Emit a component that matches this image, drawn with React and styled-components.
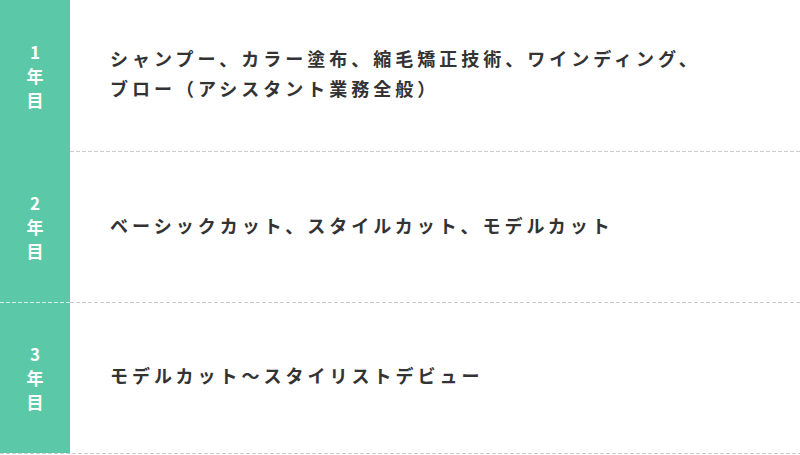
import React from "react";
import styled, { createGlobalStyle, css } from "styled-components";

const GlobalStyle = createGlobalStyle`
  html, body { margin: 0; padding: 0; background: #fff; }
  body { font-family: "Noto Sans CJK JP", "Noto Sans", sans-serif; }
`;

const dashed = (color) => css`
  background-image: repeating-linear-gradient(
    to right,
    ${color} 0 4px,
    transparent 4px 6px
  );
  background-size: 100% 1px;
  background-position: left bottom;
  background-repeat: no-repeat;
`;

const Table = styled.div`
  width: 800px;
  display: flex;
  flex-direction: column;
`;

const Row = styled.div`
  display: grid;
  grid-template-columns: 70px 1fr;
  height: ${(p) => p.$height}px;
  box-sizing: border-box;
  ${(p) =>
    p.$fullLine &&
    css`
      padding-bottom: 2px;
      ${dashed("#cccccc")}
      background-position: left calc(100% - 1px);
    `}
`;

const Head = styled.div`
  background-color: #5bc9a8;
  color: #fff;
  display: flex;
  flex-direction: column;
  align-items: center;
  justify-content: center;
  font-size: 17px;
  font-weight: 700;
  line-height: 24px;
  padding-bottom: 1px;
  box-sizing: border-box;
  ${(p) => p.$line && dashed("rgba(255,255,255,0.75)")}
`;

const Cell = styled.div`
  display: flex;
  align-items: center;
  padding: 0 0 6px 40px;
  box-sizing: border-box;
  color: #333;
  font-size: 18px;
  font-weight: 700;
  letter-spacing: 4px;
  line-height: 30px;
  ${(p) => p.$line && dashed("#cccccc")}
`;

const rows = [
  {
    n: "1",
    lines: ["シャンプー、カラー塗布、縮毛矯正技術、ワインディング、", "ブロー（アシスタント業務全般）"],
    height: 152,
    cellLine: true,
    headLine: false,
    full: false,
  },
  {
    n: "2",
    lines: ["ベーシックカット、スタイルカット、モデルカット"],
    height: 151,
    cellLine: true,
    headLine: true,
    full: false,
  },
  {
    n: "3",
    lines: ["モデルカット〜スタイリストデビュー"],
    height: 152,
    cellLine: false,
    headLine: false,
    full: true,
  },
];

export default function App() {
  return (
    <>
      <GlobalStyle />
      <Table>
        {rows.map((r) => (
          <Row key={r.n} $height={r.height} $fullLine={r.full}>
            <Head $line={r.headLine}>
              <span>{r.n}</span>
              <span>年</span>
              <span>目</span>
            </Head>
            <Cell $line={r.cellLine}>
              <div>
                {r.lines.map((l, i) => (
                  <div key={i}>{l}</div>
                ))}
              </div>
            </Cell>
          </Row>
        ))}
      </Table>
    </>
  );
}
